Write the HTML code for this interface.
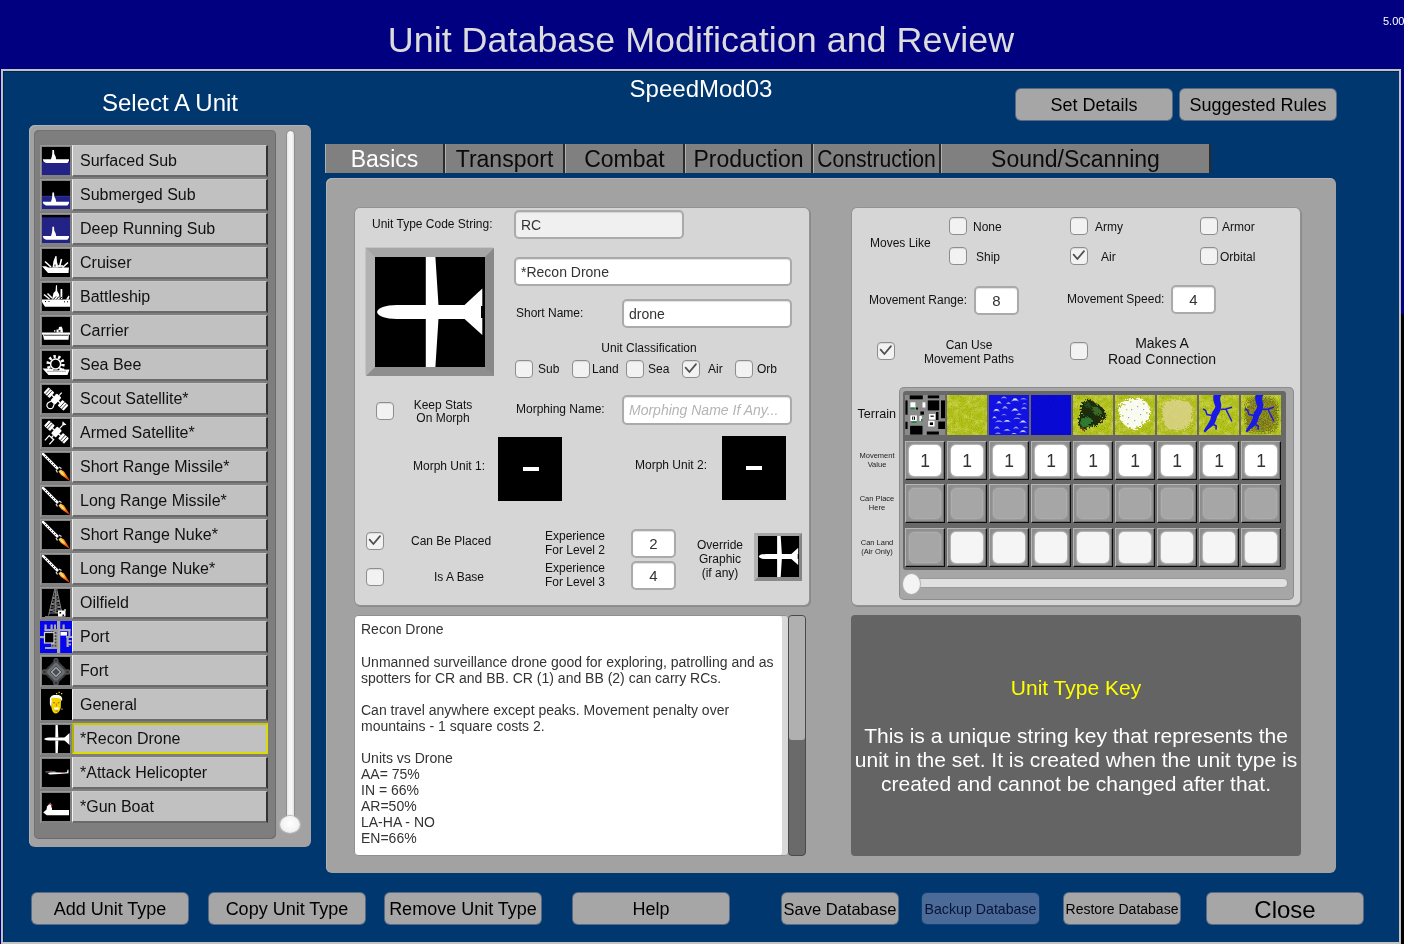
<!DOCTYPE html>
<html lang="en">
<head>
<meta charset="utf-8">
<title>Unit Database Modification and Review</title>
<style>
*{box-sizing:border-box;margin:0;padding:0}
html,body{width:1404px;height:944px;overflow:hidden;background:#000080}
body{position:relative;font-family:"Liberation Sans",Arial,sans-serif;color:#000}
.abs,.abs-all *{position:absolute}
#root{will-change:transform;position:absolute;left:0;top:0;width:1404px;height:944px;overflow:hidden;background:#000080}
#root div,#root span,#root svg{position:absolute}
.t{white-space:nowrap;line-height:1}
.c{text-align:center}
#rightblack{left:1401px;top:314px;width:3px;height:630px;background:#000}
#title{left:0;top:22.6px;width:1402px;font-size:35.9px;color:#dcdcdc;text-align:center}
#ver{left:1383px;top:16px;font-size:11px;color:#fff}
#main{left:1px;top:69px;width:1400px;height:875px;background:#00376f;border:2px solid #c2c2c2;box-shadow:inset 1px 1px 0 #00254f}
/* buttons */
.btn{background:#a6a6a6;border-radius:5px;text-align:center;white-space:nowrap;box-shadow:0 0 0 1px rgba(120,124,140,.75);padding-top:1px}
/* left list */
#listouter{left:29px;top:125px;width:282px;height:722px;background:#a2a2a2;border-radius:6px;box-shadow:inset 1px 1px 0 #b0b0b0}
#listinner{left:34px;top:130px;width:242px;height:709px;background:#7e7e7e;border-radius:5px;box-shadow:inset 1px 1px 0 #727272,inset -1px -1px 0 #6c6c6c}
.it{left:40px;width:228px;height:31px}
.it .ic{left:0;top:0;width:32px;height:32px;background:#828282;border-top:1px solid #9a9a9a;border-left:1px solid #9a9a9a}
.it .ic svg{left:1px;top:1px;width:28px;height:28px;overflow:hidden}
.it .lb{left:32px;top:0;width:196px;height:32px;background:#c1c1c1;border-right:2px solid #333;border-bottom:2px solid #6a6a6a;border-top:1px solid #c8c8c8;border-left:1px solid #f4f4f4}
.it .lb span{left:7px;top:7px;font-size:16px;line-height:1;white-space:nowrap;color:#111}
.it.sel .lb{border:2px solid #dcdc00;border-left-color:#b4b400;border-top-color:#caca00;background:#c1c1c1;height:31px}
.it.sel .lb span{left:6px;top:6px}

/* tabs */
.tab{top:144px;height:29px;background:#808080;border-left:1px solid #b0b0b0;border-right:2px solid #2c2c2c;font-size:23px;line-height:30px;text-align:center;white-space:nowrap;color:#0a0a0a}
#content{left:326px;top:178px;width:1010px;height:695px;background:#a2a2a2;border-radius:6px;box-shadow:inset 1px 1px 0 #b2b2b2}
.sub{background:#d6d6d6;border-radius:5px;box-shadow:0 0 0 1px #929292,1px 1px 0 1px #8a8a8a}
.inp{background:#fff;border:2px solid #aaa;border-radius:5px;font-size:14px;color:#333;white-space:nowrap;box-shadow:inset 0 1px 1px rgba(0,0,0,.12)}
.inp span{left:5px;top:0;line-height:26px}
.inp.num{text-align:center;font-size:15px;line-height:25px}
.l12{font-size:12px;line-height:1;white-space:nowrap;color:#111}
.l13{font-size:12px;line-height:1;white-space:nowrap;color:#111}
.cb{width:18px;height:18px;background:#f2f2f2;border:1px solid #8e8e8e;border-radius:4px;box-shadow:inset 0 1px 1px rgba(0,0,0,.1)}
.cb svg{left:0;top:0;width:16px;height:16px}

#imgframe{border:9px solid;border-color:#a6a6a6 #888 #8e8e8e #b2b2b2;background:#000;box-shadow:-1px -1px 0 #c4c4c4}
#ovframe{border:solid;border-width:3px 3px 4px 4px;border-color:#a6a6a6 #848484 #8a8a8a #b2b2b2;background:#000}
#ta{background:#fff;border:1px solid #909090;border-radius:4px;box-shadow:inset -6px 0 0 #d8d8d8}
#tasb{background:#6a6a6a;border:1px solid #4a4a4a;border-radius:4px}
#tasbthumb{left:0;top:0;width:16px;height:124px;background:#b0b0b0;border-radius:3px}

#terr{background:#a6a6a6;border-radius:4px;box-shadow:0 0 0 1px #8c8c8c}
#terrin{background:#686868;border-radius:3px}
.cell{width:40px;height:39px;background:#8e8e8e;border:1px solid;border-color:#b6b6b6 #0c0c0c #0c0c0c #b6b6b6;box-shadow:inset -1px -1px 0 #6e6e6e}
.cell .w{left:3px;top:3px;width:32px;height:31px;background:#fff;border-radius:5px;text-align:center;font-size:17.5px;line-height:33px;color:#333;box-shadow:0 0 1.5px 1px #bcbcbc}
.cell .ow{background:#f5f5f5}
.cell .g{border:1px solid #adadad;left:3px;top:3px;width:32px;height:31px;background:#a6a6a6;border-radius:5px;box-shadow:0 0 1.5px 1px #9c9c9c}
#sltrack{background:#e0e0e0;border-radius:5px;box-shadow:0 0 0 1px #9a9a9a}
#slthumb{background:#f4f4f4;border-radius:50%;box-shadow:0 0 1px 1px #b0b0b0}
#sctrack{left:286px;top:130px;width:9px;height:697px;background:linear-gradient(90deg,#e6e6e6,#f6f6f6 35%,#f6f6f6 65%,#e2e2e2);border:1px solid #8f8f8f;border-radius:5px}
#scthumb{left:280px;top:816px;width:20px;height:17px;background:radial-gradient(ellipse at 50% 45%,#fff 0,#f4f4f4 55%,#d4d4d4 100%);border-radius:50%;box-shadow:0 0 1px 1px #b4b4b4}
</style>
</head>
<body>
<div id="root">
<div id="title" class="t">Unit Database Modification and Review</div>
<div id="ver" class="t">5.00</div>
<div id="rightblack"></div>
<div id="main"></div>

<div class="t" style="left:70px;top:91px;width:200px;text-align:center;font-size:24px;color:#fff">Select A Unit</div>
<div class="t" style="left:551px;top:77px;width:300px;text-align:center;font-size:24px;color:#fff">SpeedMod03</div>
<div class="btn" style="left:1016px;top:89px;width:156px;height:31px;font-size:18px;line-height:31px">Set Details</div>
<div class="btn" style="left:1180px;top:89px;width:156px;height:31px;font-size:18px;line-height:31px">Suggested Rules</div>

<div id="listouter"></div>
<div id="listinner"></div>
<div class="it" style="top:145px"><div class="ic"><svg viewBox="0 0 28 28"><rect width="28" height="28" fill="#000"/><rect y="14.7" width="28" height="13.3" fill="#232385"/><path fill="#fff" d="M0.8 12.3 L9 12.3 L9.8 9.5 L10.2 7 L10.4 3 L12 3 L12.3 7 L13.6 9.5 L14.2 12.3 L27 12.3 L27 13.8 L25.5 16 L4 16 L1.5 14.5 Z"/></svg></div><div class="lb"><span>Surfaced Sub</span></div></div>
<div class="it" style="top:179px"><div class="ic"><svg viewBox="0 0 28 28"><rect width="28" height="28" fill="#000"/><rect y="14.9" width="28" height="13.1" fill="#232385"/><rect y="14.9" width="28" height="1" fill="#3030a8"/><path fill="#fff" d="M0.8 20.8 L9 20.8 L9.8 18.0 L10.2 15.5 L10.4 11.5 L12 11.5 L12.3 15.5 L13.6 18.0 L14.2 20.8 L27 20.8 L27 22.3 L25.5 24.5 L4 24.5 L1.5 23.0 Z"/></svg></div><div class="lb"><span>Submerged Sub</span></div></div>
<div class="it" style="top:213px"><div class="ic"><svg viewBox="0 0 28 28"><rect width="28" height="28" fill="#000"/><rect y="2.3" width="28" height="25.7" fill="#232385"/><path fill="#fff" d="M0.8 21.0 L9 21.0 L9.8 18.2 L10.2 15.7 L10.4 11.7 L12 11.7 L12.3 15.7 L13.6 18.2 L14.2 21.0 L27 21.0 L27 22.5 L25.5 24.7 L4 24.7 L1.5 23.2 Z"/></svg></div><div class="lb"><span>Deep Running Sub</span></div></div>
<div class="it" style="top:247px"><div class="ic"><svg viewBox="0 0 28 28"><rect width="28" height="28" fill="#000"/><g fill="#fff"><path d="M0 17.3 L4 17.3 L6 18.5 L27 18.5 L26.5 24 L6 24 Z"/><path d="M10.5 18.5 L11.5 12 L13.5 7 L14.5 7 L15 13 L16.5 18.5 Z"/></g><g stroke="#fff" stroke-width="1.6" fill="none"><path d="M3 12.5 L9 18"/><path d="M19.5 10 L17.5 18"/><path d="M26 13.5 L20.5 18.5"/><path d="M16 17 L21 17"/></g><rect x="12" y="15.5" width="2" height="2" fill="#888"/></svg></div><div class="lb"><span>Cruiser</span></div></div>
<div class="it" style="top:281px"><div class="ic"><svg viewBox="0 0 28 28"><rect width="28" height="28" fill="#000"/><g fill="#fff"><path d="M-1 16.5 L29 16.5 L28 23.7 L3 23.7 L0.5 20 Z"/><path d="M10 16.5 L11.5 10 L13.5 8 L14 2.2 L15 2.2 L15.2 8 L17 11 L18 16.5 Z"/><rect x="18.5" y="6" width="1.8" height="10"/><path d="M24 16.5 L26.5 12.5 L27.5 13.5 L26.5 16.5 Z"/></g><g stroke="#fff" stroke-width="1.5" fill="none"><path d="M2 11.5 L7.5 16"/><path d="M5.5 10.5 L10 15"/></g><g stroke="#000" stroke-width="1"><path d="M11.5 16.3 L14 13.5 M14.5 16.3 L17 13.5 M17.5 16.3 L20 13.8 M20.5 16.3 L22.5 14.2"/></g><g fill="#000"><rect x="3" y="18" width="1" height="1"/><rect x="6.5" y="18" width="1" height="1"/><rect x="22" y="18.3" width="1" height="1"/><rect x="25" y="18.3" width="1" height="1"/></g></svg></div><div class="lb"><span>Battleship</span></div></div>
<div class="it" style="top:315px"><div class="ic"><svg viewBox="0 0 28 28"><rect width="28" height="28" fill="#000"/><g fill="#fff"><rect x="-2" y="15.5" width="32" height="2.2"/><path d="M1 17.7 L27 17.7 L26.5 22.7 L2 22.7 Z"/><path d="M14.5 15.5 L14.5 12.5 L16.5 12.5 L17 10 L19.5 9.5 L20.5 11.5 L21 15.5 Z"/><rect x="12" y="13.2" width="1.4" height="1.4"/></g><rect x="2" y="18" width="24.5" height="1" fill="#000" opacity=".55"/><rect x="16.5" y="13.2" width="2" height="1.5" fill="#000"/></svg></div><div class="lb"><span>Carrier</span></div></div>
<div class="it" style="top:349px"><div class="ic"><svg viewBox="0 0 28 28"><rect width="28" height="28" fill="#000"/><circle cx="13.6" cy="13" r="7.4" fill="none" stroke="#fff" stroke-width="3.4" stroke-dasharray="2.3 2.35"/><circle cx="13.6" cy="13" r="5" fill="none" stroke="#fff" stroke-width="1.5"/><circle cx="13.6" cy="13" r="2.9" fill="#000"/><rect x="0" y="19" width="28" height="9" fill="#000"/><g fill="#fff"><path d="M0.5 17.5 L9 17.5 L11 19.3 L17 19.3 L19 17.5 L22 17.5 L22.5 18.4 L27.5 18.4 L25.5 24 L6.5 24 Z"/></g><path d="M5 20.3 L24 20.3" stroke="#000" stroke-width=".7" opacity=".5"/></svg></div><div class="lb"><span>Sea Bee</span></div></div>
<div class="it" style="top:383px"><div class="ic"><svg viewBox="0 0 28 28"><rect width="28" height="28" fill="#000"/><g transform="translate(14 14) rotate(42)"><g fill="#fff"><rect x="-13.5" y="-3.6" width="8" height="7.2" rx=".8"/><rect x="5.5" y="-3.6" width="8" height="7.2" rx=".8"/><rect x="-3.2" y="-4.6" width="6.4" height="9.2" rx="1"/><rect x="-5.5" y="-.7" width="11" height="1.4"/><rect x="-.6" y="-8.5" width="1.2" height="4"/></g><g stroke="#000" stroke-width=".7"><path d="M-11 -3.6V3.6M-8.5 -3.6V3.6M8.5 -3.6V3.6M11 -3.6V3.6"/></g><path d="M-2 4.6 L-3.4 8.5 A3 3 0 1 0 3.4 8.5 L2 4.6 Z" fill="none" stroke="#fff" stroke-width="1.2"/></g></svg></div><div class="lb"><span>Scout Satellite*</span></div></div>
<div class="it" style="top:417px"><div class="ic"><svg viewBox="0 0 28 28"><rect width="28" height="28" fill="#000"/><g transform="translate(14.5 13) rotate(42)"><g fill="#fff"><rect x="-13.5" y="-3.6" width="8" height="7.2" rx=".8"/><rect x="5.5" y="-3.6" width="8" height="7.2" rx=".8"/><rect x="-3.2" y="-4.6" width="6.4" height="9.2" rx="1"/><rect x="-5.5" y="-.7" width="11" height="1.4"/><rect x="-.6" y="-9" width="1.2" height="4.5"/><path d="M-2.6 -12 L2.6 -12 L0 -8.4 Z"/></g><g stroke="#000" stroke-width=".7"><path d="M-11 -3.6V3.6M-8.5 -3.6V3.6M8.5 -3.6V3.6M11 -3.6V3.6"/></g><path d="M0 4.6 V7 M-3 14 V7.6 H3 V14" fill="none" stroke="#fff" stroke-width="1.3"/></g></svg></div><div class="lb"><span>Armed Satellite*</span></div></div>
<div class="it" style="top:451px"><div class="ic"><svg viewBox="0 0 28 28"><rect width="28" height="28" fill="#000"/><defs><linearGradient id="fl9" x1="0" y1="0" x2="1" y2="1"><stop offset="0" stop-color="#ffe060"/><stop offset=".45" stop-color="#ff8a10"/><stop offset="1" stop-color="#d02000"/></linearGradient></defs><path d="M-1 -1 L16 16" stroke="#fff" stroke-width="2.6"/><path d="M3 3 L15 15" stroke="#000" stroke-width="1" stroke-dasharray="1 1.9"/><path d="M14 17 L15.5 19.5 M17 14 L19.5 15.5" stroke="#ddd" stroke-width="1.3"/><path d="M16.5 18.5 L18.5 16.5 L22 18.5 L28.5 28.5 L19 22 Z" fill="url(#fl9)"/><path d="M17.5 17.8 L21 20 L23.5 23.5 L20 21 Z" fill="#fff4a0"/></svg></div><div class="lb"><span>Short Range Missile*</span></div></div>
<div class="it" style="top:485px"><div class="ic"><svg viewBox="0 0 28 28"><rect width="28" height="28" fill="#000"/><defs><linearGradient id="fl10" x1="0" y1="0" x2="1" y2="1"><stop offset="0" stop-color="#ffe060"/><stop offset=".45" stop-color="#ff8a10"/><stop offset="1" stop-color="#d02000"/></linearGradient></defs><path d="M-1 -1 L16 16" stroke="#fff" stroke-width="2.6"/><path d="M3 3 L15 15" stroke="#000" stroke-width="1" stroke-dasharray="1 1.9"/><path d="M14 17 L15.5 19.5 M17 14 L19.5 15.5" stroke="#ddd" stroke-width="1.3"/><path d="M16.5 18.5 L18.5 16.5 L22 18.5 L28.5 28.5 L19 22 Z" fill="url(#fl10)"/><path d="M17.5 17.8 L21 20 L23.5 23.5 L20 21 Z" fill="#fff4a0"/></svg></div><div class="lb"><span>Long Range Missile*</span></div></div>
<div class="it" style="top:519px"><div class="ic"><svg viewBox="0 0 28 28"><rect width="28" height="28" fill="#000"/><defs><linearGradient id="fl11" x1="0" y1="0" x2="1" y2="1"><stop offset="0" stop-color="#ffe060"/><stop offset=".45" stop-color="#ff8a10"/><stop offset="1" stop-color="#d02000"/></linearGradient></defs><path d="M-1 -1 L16 16" stroke="#fff" stroke-width="2.6"/><path d="M3 3 L15 15" stroke="#000" stroke-width="1" stroke-dasharray="1 1.9"/><path d="M14 17 L15.5 19.5 M17 14 L19.5 15.5" stroke="#ddd" stroke-width="1.3"/><path d="M16.5 18.5 L18.5 16.5 L22 18.5 L28.5 28.5 L19 22 Z" fill="url(#fl11)"/><path d="M17.5 17.8 L21 20 L23.5 23.5 L20 21 Z" fill="#fff4a0"/></svg></div><div class="lb"><span>Short Range Nuke*</span></div></div>
<div class="it" style="top:553px"><div class="ic"><svg viewBox="0 0 28 28"><rect width="28" height="28" fill="#000"/><defs><linearGradient id="fl12" x1="0" y1="0" x2="1" y2="1"><stop offset="0" stop-color="#ffe060"/><stop offset=".45" stop-color="#ff8a10"/><stop offset="1" stop-color="#d02000"/></linearGradient></defs><path d="M-1 -1 L16 16" stroke="#fff" stroke-width="2.6"/><path d="M3 3 L15 15" stroke="#000" stroke-width="1" stroke-dasharray="1 1.9"/><path d="M14 17 L15.5 19.5 M17 14 L19.5 15.5" stroke="#ddd" stroke-width="1.3"/><path d="M16.5 18.5 L18.5 16.5 L22 18.5 L28.5 28.5 L19 22 Z" fill="url(#fl12)"/><path d="M17.5 17.8 L21 20 L23.5 23.5 L20 21 Z" fill="#fff4a0"/></svg></div><div class="lb"><span>Long Range Nuke*</span></div></div>
<div class="it" style="top:587px"><div class="ic"><svg viewBox="0 0 28 28"><rect width="28" height="28" fill="#000"/><g stroke="#8c8c8c" stroke-width=".9" fill="none"><path d="M13 -1 L6.5 26.5 M14.5 -1 L19.5 22"/><path d="M12.3 3 H15.2 M11.6 6 H16 M10.8 9 H16.6 M10 12 H17.3 M9.3 15 H18 M8.6 18 H18.6 M7.8 21 H19.3 M7 24 H16"/><path d="M12.3 3 L16 6 L10.8 9 L17.3 12 L9.3 15 L18.6 18 L7.8 21 L16 24"/><path d="M13.7 -1 V24"/><path d="M3 27.5 H20"/></g><rect x="16" y="21.5" width="7.5" height="6" fill="#fff"/><rect x="17.5" y="23" width="1.6" height="1.6" fill="#000"/><rect x="20.5" y="25.5" width="1.6" height="1.6" fill="#000"/><rect x="22.3" y="20" width="1.4" height="2" fill="#ddd"/></svg></div><div class="lb"><span>Oilfield</span></div></div>
<div class="it" style="top:621px"><div class="ic"><svg viewBox="0 0 32 32" style="left:-1px;top:-1px;width:32px;height:32px"><rect width="32" height="32" fill="#0606ee"/><g fill="#a9a9a9"><rect x="17" y="0" width="3.2" height="32"/><rect x="4.5" y="3.5" width="2.2" height="6"/><rect x="4.5" y="8" width="13" height="2.2"/><rect x="10.5" y="3.5" width="2.2" height="5"/><rect x="14" y="3.5" width="2" height="5"/><rect x="22.5" y="3.5" width="2.2" height="5"/><rect x="20" y="8" width="10.5" height="2.2"/><rect x="28.3" y="8" width="2.2" height="8"/><rect x="0" y="15" width="6" height="2.2"/><rect x="26" y="15" width="6" height="2"/><rect x="26.5" y="17" width="2.2" height="9"/><rect x="28" y="19" width="3.5" height="1.8"/><rect x="28" y="22.5" width="3" height="1.8"/><rect x="5" y="26" width="12.5" height="2"/><rect x="11" y="8" width="7" height="20" fill="#9c9c9c"/></g><rect x="4.5" y="11.5" width="9.5" height="10.5" fill="#000" stroke="#d8d8d8" stroke-width="1.2"/><rect x="20.5" y="11" width="6.5" height="3.6" fill="#fff"/><g fill="#444"><rect x="14.6" y="11" width="1.8" height="1.8"/><rect x="14.6" y="14.2" width="1.8" height="1.8"/><rect x="14.6" y="17.4" width="1.8" height="1.8"/><rect x="14.6" y="20.6" width="1.8" height="1.8"/><rect x="14.6" y="23.8" width="1.8" height="1.8"/><rect x="11.6" y="23.8" width="1.8" height="1.8"/><rect x="11.6" y="10" width="1.8" height="1.2"/></g></svg></div><div class="lb"><span>Port</span></div></div>
<div class="it" style="top:655px"><div class="ic"><svg viewBox="0 0 28 28"><rect width="28" height="28" fill="#000"/><g><path d="M14 2 L27 15 L14 28 L1 15 Z" fill="#3e4246"/><path d="M14 5 L24 15 L14 25 L4 15 Z" fill="#6a6e72"/><path d="M14 8.5 L20.5 15 L14 21.5 L7.5 15 Z" fill="#4a4e52"/><path d="M14 10.5 L18.5 15 L14 19.5 L9.5 15 Z" fill="none" stroke="#e8e8e8" stroke-width="1"/><circle cx="14" cy="3.5" r="2.6" fill="#50545a"/><circle cx="14" cy="26" r="2.8" fill="#50545a"/><circle cx="2.5" cy="15" r="2.8" fill="#50545a"/><circle cx="25.5" cy="15" r="2.8" fill="#50545a"/><circle cx="14" cy="3.5" r="1.2" fill="#30343a"/><circle cx="14" cy="26" r="1.3" fill="#30343a"/><circle cx="2.5" cy="15" r="1.3" fill="#30343a"/><circle cx="25.5" cy="15" r="1.3" fill="#30343a"/></g></svg></div><div class="lb"><span>Fort</span></div></div>
<div class="it" style="top:689px"><div class="ic"><svg viewBox="0 0 31 31" style="left:0px;top:-1px;width:31px;height:31px"><rect width="31" height="31" fill="#000"/><path d="M9 12 C8 7 12 5.5 15.5 6 C19.5 5.5 22 8 21 12 L19 10 H11.5 Z" fill="#fff"/><path d="M10.5 10.5 C10 9 12 8.5 15 9 C18 8.5 20.5 9.5 20 12 L19.8 18.5 C19 22.5 16.5 24.5 14.5 24.5 C12 24 10.5 21 10.3 17 Z" fill="#f4d400"/><path d="M9 11 C8.5 14 9 17 10.3 18 L11 11 Z" fill="#fff"/><path d="M13 18.5 H18 L17.5 20.5 H13.5 Z" fill="#fff"/><rect x="12.3" y="13" width="1.6" height="1.4" fill="#c07000"/><rect x="16.8" y="13" width="1.6" height="1.4" fill="#c07000"/><rect x="14.8" y="14.5" width="1.3" height="3" fill="#d89000"/><rect x="14.5" y="21.5" width="2.5" height="1" fill="#c07000"/><rect x="15" y="4" width="1.3" height="1.3" fill="#f4d400"/><rect x="17.5" y="2.8" width="1.3" height="1.3" fill="#f4d400"/><rect x="20" y="4" width="1.3" height="1.3" fill="#f4d400"/><rect x="20.2" y="19.5" width="1.5" height="1.2" fill="#c0a060"/></svg></div><div class="lb"><span>General</span></div></div>
<div class="it sel" style="top:723px"><div class="ic"><svg viewBox="0 0 28 28"><rect width="28" height="28" fill="#000"/><g fill="#fff"><path d="M13.5 0 H15.8 L16.3 12.4 H13.3 Z M13.3 15.6 H16.3 L15.8 28 H13.5 Z"/><path d="M2 14 C3 12.7 6 12.4 9 12.4 H26 V15.6 H9 C6 15.6 3 15.3 2 14 Z"/><path d="M22.5 12.6 L27.5 8 V20 L22.5 15.4 Z"/></g></svg></div><div class="lb"><span>*Recon Drone</span></div></div>
<div class="it" style="top:757px"><div class="ic"><svg viewBox="0 0 28 28"><rect width="28" height="28" fill="#000"/><g fill="#fff"><path d="M5.5 14.8 L8 13.4 L12 13.2 L17 13.6 L25 13.2 L25.5 10.8 L26.5 10.8 L26.5 14.2 L17 15 L8 15.6 Z"/><rect x="3.5" y="12.6" width="10" height=".7" fill="#ccc"/></g><rect x="19" y="13.3" width="4" height=".7" fill="#c03030"/><rect x="8.5" y="11.6" width="1" height="1" fill="#a03030"/></svg></div><div class="lb"><span>*Attack Helicopter</span></div></div>
<div class="it" style="top:791px"><div class="ic"><svg viewBox="0 0 28 28"><rect width="28" height="28" fill="#000"/><g fill="#fff"><path d="M1.2 19.6 L4 17 H27 V22.2 H4.8 Z"/><path d="M4.3 17.2 L5 13.5 L7 11.2 L10 11.8 V17.2 Z"/></g><rect x="9" y="11" width="1.2" height="3.6" fill="#b03030"/><rect x="7.5" y="9.8" width="1.5" height="1.2" fill="#a06060"/></svg></div><div class="lb"><span>*Gun Boat</span></div></div>
<div id="sctrack"></div><div id="scthumb"></div>

<div class="tab" style="left:325px;width:120px;color:#fff">Basics</div>
<div class="tab" style="left:445px;width:120px">Transport</div>
<div class="tab" style="left:565px;width:120px">Combat</div>
<div class="tab" style="left:685px;width:128px">Production</div>
<div class="tab" style="left:813px;width:128px"><span style="left:-2px;top:0;width:129.2px;transform:scaleX(.918);transform-origin:50% 50%">Construction</span></div>
<div class="tab" style="left:941px;width:270px">Sound/Scanning</div>
<div id="content"></div>

<div class="sub" style="left:355px;top:208px;width:454px;height:397px"></div>
<div class="l12" style="left:372px;top:218px">Unit Type Code String:</div>
<div class="inp" style="left:514px;top:210px;width:170px;height:29px;background:#f0f0f0"><span>RC</span></div>
<div id="imgframe" style="left:366px;top:248px;width:128px;height:128px"></div>
<svg style="left:375px;top:257px;width:109px;height:110px" viewBox="0 0 109 110"><rect width="109" height="110" fill="#000"/><g fill="#fff"><path d="M50.8 0 H60.4 L63.5 48.5 H50.8 Z M50.8 61.5 H63.5 L60.4 110 H50.8 Z"/><path d="M2 55 C3 50.5 10 48.3 22 48 L104 48 L106 49 V61 L104 62 L22 62 C10 61.7 3 59.5 2 55 Z"/><path d="M89 48.5 L107.3 31.5 L107.3 49 Z"/><path d="M89 61.5 L107.3 78 L107.3 61 Z"/></g></svg>
<div class="inp" style="left:514px;top:257px;width:278px;height:29px"><span>*Recon Drone</span></div>
<div class="l12" style="left:516px;top:307px">Short Name:</div>
<div class="inp" style="left:622px;top:299px;width:170px;height:29px"><span>drone</span></div>
<div class="l12 c" style="left:549px;top:342px;width:200px">Unit Classification</div>
<div class="cb" style="left:515px;top:360px"></div>
<div class="l12" style="left:538px;top:363px">Sub</div>
<div class="cb" style="left:572px;top:360px"></div>
<div class="l12" style="left:592px;top:363px">Land</div>
<div class="cb" style="left:626px;top:360px"></div>
<div class="l12" style="left:648px;top:363px">Sea</div>
<div class="cb" style="left:682px;top:360px"><svg viewBox="0 0 16 16"><path d="M2.6 6.6 L6.4 11 L13 3.1" fill="none" stroke="#4e4e4e" stroke-width="1.75" stroke-linecap="round" stroke-linejoin="round"/></svg></div>
<div class="l12" style="left:708px;top:363px">Air</div>
<div class="cb" style="left:735px;top:360px"></div>
<div class="l12" style="left:757px;top:363px">Orb</div>
<div class="cb" style="left:376px;top:402px"></div>
<div class="l12 c" style="left:393px;top:398.5px;width:100px;line-height:13.5px">Keep Stats<br>On Morph</div>
<div class="l12" style="left:516px;top:403px">Morphing Name:</div>
<div class="inp" style="left:622px;top:395px;width:170px;height:30px"><span style="font-style:italic;color:#b4b4b4;line-height:26px">Morphing Name If Any...</span></div>
<div class="l12" style="left:413px;top:460px">Morph Unit 1:</div>
<div style="left:498px;top:437px;width:64px;height:64px;background:#000"><div style="left:25px;top:29.5px;width:16px;height:4.4px;background:#fff"></div></div>
<div class="l12" style="left:635px;top:459px">Morph Unit 2:</div>
<div style="left:722px;top:436px;width:64px;height:64px;background:#000"><div style="left:24px;top:29.5px;width:16px;height:4.4px;background:#fff"></div></div>
<div class="cb" style="left:366px;top:532px"><svg viewBox="0 0 16 16"><path d="M2.6 6.6 L6.4 11 L13 3.1" fill="none" stroke="#4e4e4e" stroke-width="1.75" stroke-linecap="round" stroke-linejoin="round"/></svg></div>
<div class="l12" style="left:411px;top:535px">Can Be Placed</div>
<div class="cb" style="left:366px;top:568px"></div>
<div class="l12" style="left:434px;top:571px">Is A Base</div>
<div class="l12" style="left:545px;top:528.6px;line-height:14px;font-size:12px">Experience<br>For Level 2</div>
<div class="l12" style="left:545px;top:560.6px;line-height:14px;font-size:12px">Experience<br>For Level 3</div>
<div class="inp num" style="left:631px;top:529px;width:45px;height:29px">2</div>
<div class="inp num" style="left:631px;top:561px;width:45px;height:29px">4</div>
<div class="l12 c" style="left:670px;top:537.5px;width:100px;line-height:14px;font-size:12px">Override<br>Graphic<br>(if any)</div>
<div id="ovframe" style="left:754px;top:533px;width:48px;height:48px"></div>
<svg style="left:758px;top:536px;width:41px;height:41px" viewBox="0 0 109 110"><rect width="109" height="110" fill="#000"/><g fill="#fff"><path d="M50.8 0 H60.4 L63.5 48.5 H50.8 Z M50.8 61.5 H63.5 L60.4 110 H50.8 Z"/><path d="M2 55 C3 50.5 10 48.3 22 48 L104 48 L106 49 V61 L104 62 L22 62 C10 61.7 3 59.5 2 55 Z"/><path d="M89 48.5 L107.3 31.5 L107.3 49 Z"/><path d="M89 61.5 L107.3 78 L107.3 61 Z"/></g></svg>
<div id="ta" style="left:354px;top:615px;width:435px;height:241px"></div>
<div id="tatext" style="left:361px;top:621.4px;width:420px;font-size:14px;line-height:16.07px;color:#333">Recon Drone<br><br>Unmanned surveillance drone good for exploring, patrolling and as<br>spotters for CR and BB. CR (1) and BB (2) can carry RCs.<br><br>Can travel anywhere except peaks. Movement penalty over<br>mountains - 1 square costs 2.<br><br>Units vs Drone<br>AA= 75%<br>IN = 66%<br>AR=50%<br>LA-HA - NO<br>EN=66%</div>
<div id="tasb" style="left:788px;top:615px;width:18px;height:241px"><div id="tasbthumb"></div></div>

<div class="sub" style="left:852px;top:208px;width:448px;height:397px"></div>
<div class="l12" style="left:870px;top:236.6px">Moves Like</div>
<div class="cb" style="left:949px;top:217px"></div>
<div class="l12" style="left:973px;top:221px">None</div>
<div class="cb" style="left:949px;top:247px"></div>
<div class="l12" style="left:976px;top:251px">Ship</div>
<div class="cb" style="left:1070px;top:217px"></div>
<div class="l12" style="left:1095px;top:221px">Army</div>
<div class="cb" style="left:1070px;top:247px"><svg viewBox="0 0 16 16"><path d="M2.6 6.6 L6.4 11 L13 3.1" fill="none" stroke="#4e4e4e" stroke-width="1.75" stroke-linecap="round" stroke-linejoin="round"/></svg></div>
<div class="l12" style="left:1101px;top:251px">Air</div>
<div class="cb" style="left:1200px;top:217px"></div>
<div class="l12" style="left:1222px;top:221px">Armor</div>
<div class="cb" style="left:1200px;top:247px"></div>
<div class="l12" style="left:1220px;top:251px">Orbital</div>
<div class="l13" style="left:869px;top:294px">Movement Range:</div>
<div class="inp num" style="left:974px;top:286px;width:45px;height:29px">8</div>
<div class="l13" style="left:1067px;top:293px">Movement Speed:</div>
<div class="inp num" style="left:1171px;top:285px;width:45px;height:29px">4</div>
<div class="cb" style="left:877px;top:342px"><svg viewBox="0 0 16 16"><path d="M2.6 6.6 L6.4 11 L13 3.1" fill="none" stroke="#4e4e4e" stroke-width="1.75" stroke-linecap="round" stroke-linejoin="round"/></svg></div>
<div class="l12 c" style="left:909px;top:339px;width:120px;line-height:13.7px;font-size:12px">Can Use<br>Movement Paths</div>
<div class="cb" style="left:1070px;top:342px"></div>
<div class="c" style="left:1082px;top:335px;width:160px;line-height:16.2px;font-size:14px;white-space:nowrap;color:#111">Makes A<br>Road Connection</div>
<svg width="0" height="0" style="left:0;top:0"><defs>
<filter id="nz" x="0" y="0" width="100%" height="100%"><feTurbulence type="fractalNoise" baseFrequency="0.9" numOctaves="2" seed="3" result="n"/><feColorMatrix in="n" type="matrix" values="0 0 0 0 0  0 0 0 0 0  0 0 0 0 0  0.9 0.9 0 0 -0.78" result="a"/><feFlood flood-color="#7c8c00"/><feComposite in2="a" operator="in" result="d"/><feTurbulence type="fractalNoise" baseFrequency="0.16" numOctaves="2" seed="11" result="n2"/><feColorMatrix in="n2" type="matrix" values="0 0 0 0 0  0 0 0 0 0  0 0 0 0 0  2.4 0 0 0 -1.0" result="a2"/><feFlood flood-color="#d2d84a"/><feComposite in2="a2" operator="in" result="l"/><feMerge><feMergeNode in="SourceGraphic"/><feMergeNode in="l"/><feMergeNode in="d"/></feMerge></filter>
<filter id="nzw" x="-10%" y="-10%" width="120%" height="120%"><feTurbulence type="fractalNoise" baseFrequency="0.55" numOctaves="2" seed="8" result="n"/><feDisplacementMap in="SourceGraphic" in2="n" scale="7"/></filter>
<filter id="spk" x="0" y="0" width="100%" height="100%"><feTurbulence type="fractalNoise" baseFrequency="1.1" numOctaves="1" seed="5" result="n"/><feColorMatrix in="n" type="matrix" values="0 0 0 0 0  0 0 0 0 0  0 0 0 0 0  2.5 0 0 0 -1.1" result="a"/><feComposite in="SourceGraphic" in2="a" operator="in"/></filter>
<filter id="spk2" x="0" y="0" width="100%" height="100%"><feTurbulence type="fractalNoise" baseFrequency="0.95" numOctaves="1" seed="21" result="n"/><feColorMatrix in="n" type="matrix" values="0 0 0 0 0  0 0 0 0 0  0 0 0 0 0  0 2.8 0 0 -1.45" result="a"/><feComposite in="SourceGraphic" in2="a" operator="in"/></filter>
</defs></svg>
<div id="terr" style="left:900px;top:388px;width:393px;height:211px"></div>
<div id="terrin" style="left:903px;top:391px;width:383px;height:179px"></div>
<div class="t" style="left:857.5px;top:408px;font-size:12.6px;color:#111">Terrain</div>
<div class="c" style="left:847px;top:451px;width:60px;font-size:7.5px;line-height:9px;color:#222">Movement<br>Value</div>
<div class="c" style="left:847px;top:494px;width:60px;font-size:7.5px;line-height:9px;color:#222">Can Place<br>Here</div>
<div class="c" style="left:847px;top:538px;width:60px;font-size:7.5px;line-height:9px;color:#222">Can Land<br>(Air Only)</div>
<svg class="tile" style="left:905px;top:395px;width:40px;height:40px" viewBox="0 0 40 40"><rect width="40" height="40" fill="#8a8a8a"/><g fill="#000"><rect x="4.7" y=".4" width="13.1" height="3.9"/><rect x="22.8" y=".4" width="11.4" height="2.9"/><rect x="22.8" y="5.4" width="11.4" height="10"/><rect x="36" y="5.4" width="4" height="17.8"/><rect x=".4" y="5.4" width="2.2" height="14.3"/><rect x="15.4" y="16.5" width="3.6" height="3.2"/><rect x="33.2" y="26.5" width="6.8" height="7.5"/><rect x="5.1" y="30.8" width="12.4" height="8.8"/><rect x="21.8" y="36.5" width="12.1" height="3.1"/><rect x=".4" y="26.8" width="2.2" height="7.2"/><rect x="11" y="12.5" width="2" height="2"/><rect x="31" y="17" width="2.5" height="8"/></g><g fill="#fff"><rect x="5.4" y="7.3" width="5" height="5.2"/><rect x="17.5" y="7.3" width="2.9" height="5.2"/><rect x="5.4" y="20.4" width="6.4" height="5.6"/><rect x="14.4" y="21" width="2.4" height="5"/><rect x="24" y="19" width="6.3" height="5.6"/><rect x="23.2" y="25.8" width="6.4" height="5.7"/></g><g fill="#000"><rect x="7.2" y="21.6" width="2.8" height="3.2"/><rect x="25.5" y="20.6" width="3.3" height="1.2"/><rect x="24.8" y="27.4" width="3.2" height="2.6"/></g><g fill="#0a8a3a"><rect x="5.4" y="12.5" width="4.4" height="1.8"/><rect x="6.5" y="26.4" width="5" height="1.5"/><rect x="16" y="24" width="1.4" height="2.5"/></g><rect x="8.2" y="21.6" width=".8" height="3.2" fill="#fff"/></svg>
<div class="cell" style="left:905px;top:441px"><div class="w">1</div></div>
<div class="cell" style="left:905px;top:484px"><div class="g"></div></div>
<div class="cell" style="left:905px;top:528px"><div class="g"></div></div>
<svg class="tile" style="left:947px;top:395px;width:40px;height:40px" viewBox="0 0 40 40"><rect width="40" height="40" fill="#b3c41f" filter="url(#nz)"/></svg>
<div class="cell" style="left:947px;top:441px"><div class="w">1</div></div>
<div class="cell" style="left:947px;top:484px"><div class="g"></div></div>
<div class="cell" style="left:947px;top:528px"><div class="w ow"></div></div>
<svg class="tile" style="left:989px;top:395px;width:40px;height:40px" viewBox="0 0 40 40"><rect width="40" height="40" fill="#1212e2"/><g fill="#aebcf2" opacity=".82"><path d="M7 9 q3.0 -5.2 6 0 q-3.0 -1.3 -6 0z"/><path d="M12 3.6 q3.0 -4 6 0 q-3.0 -1.0 -6 0z"/><path d="M22 6.4 q4.0 -6 8 0 q-4.0 -1.5 -8 0z"/><path d="M31 4.6 q3.5 -3.2 7 0 q-3.5 -0.8 -7 0z"/><path d="M4 16.5 q3.5 -4.8 7 0 q-3.5 -1.2 -7 0z"/><path d="M13 14 q3.0 -6 6 0 q-3.0 -1.5 -6 0z"/><path d="M22 16.4 q4.0 -5.6 8 0 q-4.0 -1.4 -8 0z"/><path d="M32 14.2 q3.0 -4.4 6 0 q-3.0 -1.1 -6 0z"/><path d="M3 23.6 q2.5 -4 5 0 q-2.5 -1.0 -5 0z"/><path d="M6 27.4 q4.0 -4.4 8 0 q-4.0 -1.1 -8 0z"/><path d="M14 27.2 q4.0 -4 8 0 q-4.0 -1.0 -8 0z"/><path d="M24 24.2 q4.0 -3.2 8 0 q-4.0 -0.8 -8 0z"/><path d="M30 28.2 q4.0 -5.2 8 0 q-4.0 -1.3 -8 0z"/><path d="M5 34 q3.0 -5.6 6 0 q-3.0 -1.4 -6 0z"/><path d="M14 36 q4.0 -3.2 8 0 q-4.0 -0.8 -8 0z"/><path d="M24 34 q3.0 -5.2 6 0 q-3.0 -1.3 -6 0z"/><path d="M30 37.6 q4.0 -4.4 8 0 q-4.0 -1.1 -8 0z"/><path d="M6 39 q3.0 -2.8 6 0 q-3.0 -0.7 -6 0z"/><path d="M22 39.2 q3.0 -2.4 6 0 q-3.0 -0.6 -6 0z"/><path d="M34 33 q2.5 -3.0 5 0 q-2.5 -0.75 -5 0z"/><path d="M17 9 q2.5 -2.8 5 0 q-2.5 -0.7 -5 0z"/><path d="M33 9.5 q2.5 -3.2 5 0 q-2.5 -0.8 -5 0z"/><path d="M27 20 q3.0 -3.0 6 0 q-3.0 -0.75 -6 0z"/><path d="M12 20.5 q3.0 -3.2 6 0 q-3.0 -0.8 -6 0z"/></g><g fill="#e8ecff" opacity=".8"><ellipse cx="10.0" cy="7.05" rx="1.7" ry="0.8"/><ellipse cx="26.0" cy="4.15" rx="2.2" ry="0.9"/><ellipse cx="7.5" cy="14.7" rx="2.0" ry="0.7"/><ellipse cx="26.0" cy="14.299999999999999" rx="2.2" ry="0.8"/><ellipse cx="5.5" cy="22.1" rx="1.4" ry="0.6"/><ellipse cx="18.0" cy="25.7" rx="2.2" ry="0.6"/><ellipse cx="34.0" cy="26.25" rx="2.2" ry="0.8"/><ellipse cx="18.0" cy="34.8" rx="2.2" ry="0.5"/><ellipse cx="34.0" cy="35.95" rx="2.2" ry="0.7"/><ellipse cx="25.0" cy="38.300000000000004" rx="1.7" ry="0.4"/><ellipse cx="19.5" cy="7.95" rx="1.4" ry="0.4"/><ellipse cx="30.0" cy="18.875" rx="1.7" ry="0.4"/></g></svg>
<div class="cell" style="left:989px;top:441px"><div class="w">1</div></div>
<div class="cell" style="left:989px;top:484px"><div class="g"></div></div>
<div class="cell" style="left:989px;top:528px"><div class="w ow"></div></div>
<svg class="tile" style="left:1031px;top:395px;width:40px;height:40px" viewBox="0 0 40 40"><rect width="40" height="40" fill="#0a0ad6"/><rect width="40" height="40" fill="#0000b0" filter="url(#spk)" opacity=".35"/></svg>
<div class="cell" style="left:1031px;top:441px"><div class="w">1</div></div>
<div class="cell" style="left:1031px;top:484px"><div class="g"></div></div>
<div class="cell" style="left:1031px;top:528px"><div class="w ow"></div></div>
<svg class="tile" style="left:1073px;top:395px;width:40px;height:40px" viewBox="0 0 40 40"><rect width="40" height="40" fill="#b3c41f" filter="url(#nz)"/><g filter="url(#nzw)"><path d="M12 6 C17 3 21 6 23 9 C27 10 31 13 32 17 C34 21 31 26 27 27 C24 31 18 31 14 33 C10 36 6 33 6 29 C4 25 6 21 8 18 C7 13 8 8 12 6 Z" fill="#1c2c10"/><path d="M8 24 C12 20 18 22 20 26 C19 30 14 32 10 32 C7 30 6 27 8 24 Z" fill="#2f7a30"/><path d="M20 12 C24 11 28 14 29 18 C27 21 23 21 21 19 C19 17 19 14 20 12 Z" fill="#3c6a24"/><path d="M12 8 C15 6 18 8 18 11 C16 13 13 13 11 12 Z" fill="#28501c"/><path d="M9 32 L13 34 L12 36 L8 35 Z" fill="#6a3c14"/><path d="M26 23 L30 24 L28 27 Z" fill="#5a3a14"/></g></svg>
<div class="cell" style="left:1073px;top:441px"><div class="w">1</div></div>
<div class="cell" style="left:1073px;top:484px"><div class="g"></div></div>
<div class="cell" style="left:1073px;top:528px"><div class="w ow"></div></div>
<svg class="tile" style="left:1115px;top:395px;width:40px;height:40px" viewBox="0 0 40 40"><rect width="40" height="40" fill="#b3c41f" filter="url(#nz)"/><g filter="url(#nzw)"><path d="M8 7 C12 3 19 5 22 3 C27 4 33 6 34 12 C37 17 35 23 31 26 C28 31 24 32 21 35 C17 33 12 33 9 29 C4 26 5 19 4 15 C5 11 6 9 8 7 Z" fill="#fff" opacity=".93"/></g><g fill="#b3c41f" opacity=".8"><rect x="9" y="9" width="1.5" height="1.5"/><rect x="15" y="6" width="1.5" height="1.5"/><rect x="28" y="8" width="1.6" height="1.6"/><rect x="31" y="17" width="1.6" height="1.6"/><rect x="7" y="20" width="1.6" height="1.6"/><rect x="12" y="28" width="1.6" height="1.6"/><rect x="26" y="27" width="1.6" height="1.6"/><rect x="21" y="31" width="1.4" height="1.4"/><rect x="11" y="14" width="1.3" height="1.3"/></g><g fill="#8088b8" opacity=".8"><rect x="16" y="14" width="1.2" height="1.2"/><rect x="22" y="11" width="1.2" height="1.2"/><rect x="25" y="19" width="1.2" height="1.2"/><rect x="13" y="22" width="1.2" height="1.2"/><rect x="19" y="25" width="1.2" height="1.2"/><rect x="28" y="14" width="1.2" height="1.2"/></g></svg>
<div class="cell" style="left:1115px;top:441px"><div class="w">1</div></div>
<div class="cell" style="left:1115px;top:484px"><div class="g"></div></div>
<div class="cell" style="left:1115px;top:528px"><div class="w ow"></div></div>
<svg class="tile" style="left:1157px;top:395px;width:40px;height:40px" viewBox="0 0 40 40"><rect width="40" height="40" fill="#b3c41f" filter="url(#nz)"/><g filter="url(#nzw)"><path d="M9 7 C15 3 24 5 30 6 C35 9 36 15 35 21 C36 27 32 33 26 34 C20 37 12 35 9 31 C5 27 6 21 5 16 C5 12 6 9 9 7 Z" fill="#dcd48c" opacity=".85"/></g><rect width="40" height="40" fill="#c8c060" filter="url(#spk)" opacity=".35"/></svg>
<div class="cell" style="left:1157px;top:441px"><div class="w">1</div></div>
<div class="cell" style="left:1157px;top:484px"><div class="g"></div></div>
<div class="cell" style="left:1157px;top:528px"><div class="w ow"></div></div>
<svg class="tile" style="left:1199px;top:395px;width:40px;height:40px" viewBox="0 0 40 40"><rect width="40" height="40" fill="#b3c41f" filter="url(#nz)"/><path d="M14.5 0 C13.5 4 15 8 16.4 11.5 C16 14 13.5 16 12.8 18 C12 21 12 24 10 27 C8.5 29.5 6.5 32.5 4.5 36 L6 37.5 C8.5 35 12 32 14.5 30 C16.5 27.5 17 25 17.8 22.5 C18.5 20 20.5 18.5 21.5 15 C22.5 12 22.5 9 21.6 6.5 C20.8 4 21 2 22.5 0 Z" fill="#1a1ae2"/><path d="M4 14 L6.5 15.2 L8 19.6 L13 20.4 M21.5 14.6 L27 14 L33 12.3 M27 14.4 L30 20.5 L33 26.5 M14.5 29.5 L17.2 31 L17 34.6" fill="none" stroke="#1a1ae2" stroke-width="1.5"/></svg>
<div class="cell" style="left:1199px;top:441px"><div class="w">1</div></div>
<div class="cell" style="left:1199px;top:484px"><div class="g"></div></div>
<div class="cell" style="left:1199px;top:528px"><div class="w ow"></div></div>
<svg class="tile" style="left:1241px;top:395px;width:40px;height:40px" viewBox="0 0 40 40"><rect width="40" height="40" fill="#b3c41f" filter="url(#nz)"/><g filter="url(#nzw)"><path d="M9 5 C15 1 26 2 32 6 C37 10 37 18 36 24 C35 31 29 36 22 37 C15 38 8 35 6 29 C3 23 4 10 9 5 Z" fill="#7a6a22" opacity=".55"/></g><rect x="3" y="1" width="35" height="38" rx="10" fill="#2c6a1c" filter="url(#spk)" opacity=".95"/><rect x="3" y="1" width="35" height="38" rx="10" fill="#a83a14" filter="url(#spk2)" opacity=".9"/><path d="M14.5 0 C13.5 4 15 8 16.4 11.5 C16 14 13.5 16 12.8 18 C12 21 12 24 10 27 C8.5 29.5 6.5 32.5 4.5 36 L6 37.5 C8.5 35 12 32 14.5 30 C16.5 27.5 17 25 17.8 22.5 C18.5 20 20.5 18.5 21.5 15 C22.5 12 22.5 9 21.6 6.5 C20.8 4 21 2 22.5 0 Z" fill="#1a1ae2"/><path d="M4 14 L6.5 15.2 L8 19.6 L13 20.4 M21.5 14.6 L27 14 L33 12.3 M27 14.4 L30 20.5 L33 26.5 M14.5 29.5 L17.2 31 L17 34.6" fill="none" stroke="#1a1ae2" stroke-width="1.5"/></svg>
<div class="cell" style="left:1241px;top:441px"><div class="w">1</div></div>
<div class="cell" style="left:1241px;top:484px"><div class="g"></div></div>
<div class="cell" style="left:1241px;top:528px"><div class="w ow"></div></div>
<div id="sltrack" style="left:905px;top:579px;width:382px;height:8px"></div><div id="slthumb" style="left:903px;top:573.5px;width:16.5px;height:20px"></div>
<div style="left:851px;top:615px;width:450px;height:241px;background:#646464;border-radius:4px"></div>
<div class="t c" style="left:851px;top:677px;width:450px;font-size:21px;color:#ffff00">Unit Type Key</div>
<div class="c" style="left:841px;top:724px;width:470px;font-size:21px;line-height:24px;color:#fff;white-space:nowrap">This is a unique string key that represents the<br>unit in the set. It is created when the unit type is<br>created and cannot be changed after that.</div>

<div class="btn" style="left:32px;top:893px;width:156px;height:31px;font-size:18px;line-height:31px;">Add Unit Type</div>
<div class="btn" style="left:209px;top:893px;width:156px;height:31px;font-size:18px;line-height:31px;">Copy Unit Type</div>
<div class="btn" style="left:385px;top:893px;width:156px;height:31px;font-size:18px;line-height:31px;">Remove Unit Type</div>
<div class="btn" style="left:573px;top:893px;width:156px;height:31px;font-size:18px;line-height:31px;">Help</div>
<div class="btn" style="left:782px;top:893px;width:116px;height:31px;font-size:16.5px;line-height:31px;">Save Database</div>
<div class="btn" style="left:922px;top:893px;width:117px;height:31px;font-size:14.2px;line-height:31px;background:#4b6a97;color:#06143a;box-shadow:0 0 0 1px rgba(20,70,130,.7);">Backup Database</div>
<div class="btn" style="left:1064px;top:893px;width:116px;height:31px;font-size:14px;line-height:31px;">Restore Database</div>
<div class="btn" style="left:1207px;top:893px;width:156px;height:31px;font-size:24px;line-height:31px;">Close</div>

</div>
</body>
</html>
